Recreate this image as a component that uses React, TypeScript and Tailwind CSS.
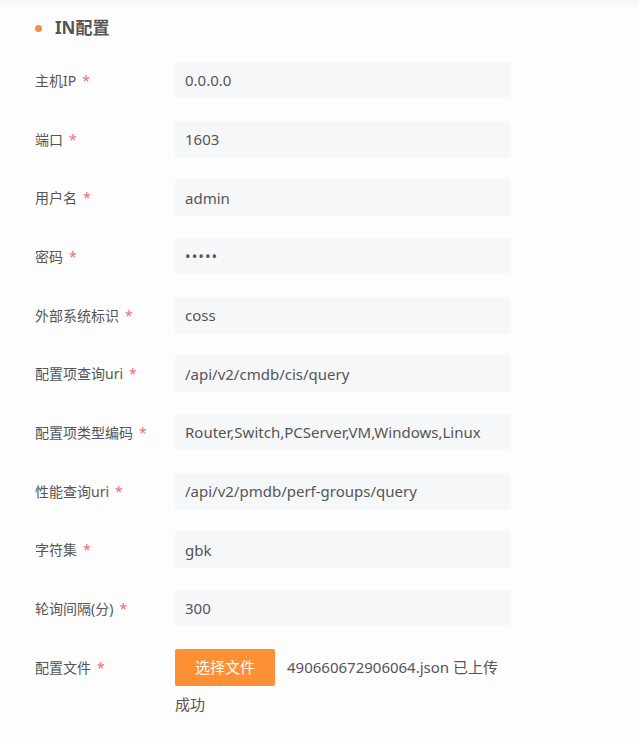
import React from "react";

const rows: { label: string; value: string; password?: boolean }[] = [
    { label: "主机IP", value: "0.0.0.0" },
    { label: "端口", value: "1603" },
    { label: "用户名", value: "admin" },
    { label: "密码", value: "•••••", password: true },
    { label: "外部系统标识", value: "coss" },
    { label: "配置项查询uri", value: "/api/v2/cmdb/cis/query" },
    { label: "配置项类型编码", value: "Router,Switch,PCServer,VM,Windows,Linux" },
    { label: "性能查询uri", value: "/api/v2/pmdb/perf-groups/query" },
    { label: "字符集", value: "gbk" },
    { label: "轮询间隔(分)", value: "300" },
];

const Label = ({ text }: { text: string }) => (
    <div className="w-[175px] shrink-0 pl-[35px] text-[14px] text-[#555] whitespace-nowrap">
        {text}
        <span className="ml-[6px] text-[#f56c6c]">*</span>
    </div>
);

const App: React.FC = () => {
    return (
        <div
            className="min-h-[742px] w-[639px] bg-[#fdfdfd] text-[#555]"
            style={{ fontFamily: '"Noto Sans", "Noto Sans CJK SC", sans-serif' }}
        >
            <div className="h-[10px] bg-gradient-to-b from-[#f6f6f6] to-[#fdfdfd]" />
            {/* 标题 */}
            <div className="flex items-center h-[36px] pl-[35px]">
                <span className="w-[7px] h-[7px] rounded-full bg-[#fb8c3a]" />
                <span className="ml-[13px] text-[17px] font-bold text-[#555]">IN配置</span>
            </div>

            <div className="mt-[16px]">
                {rows.map((row) => (
                    <div key={row.label} className="flex items-center mb-[21.67px]">
                        <Label text={row.label} />
                        <div className="w-[336px] h-[37px] bg-[#f6f7f9] rounded-[2px] flex items-center px-[10px] text-[15px] text-[#555] whitespace-nowrap overflow-hidden">
                            {row.password ? (
                                <span className="tracking-[1px] text-[15px]">{row.value}</span>
                            ) : (
                                row.value
                            )}
                        </div>
                    </div>
                ))}

                <div className="flex items-start">
                    <div className="h-[37px] flex items-center">
                        <Label text="配置文件" />
                    </div>
                    <div className="w-[336px] text-[15px] leading-[37px] text-[#555]">
                        <div className="flex">
                            <button
                                type="button"
                                className="w-[100px] h-[37px] rounded-[2px] bg-[#fd8f34] text-white text-[15px] mr-[12px]"
                            >
                                选择文件
                            </button>
                            <span>490660672906064.json 已上传</span>
                        </div>
                        <div>成功</div>
                    </div>
                </div>
            </div>
        </div>
    );
};

export default App;
